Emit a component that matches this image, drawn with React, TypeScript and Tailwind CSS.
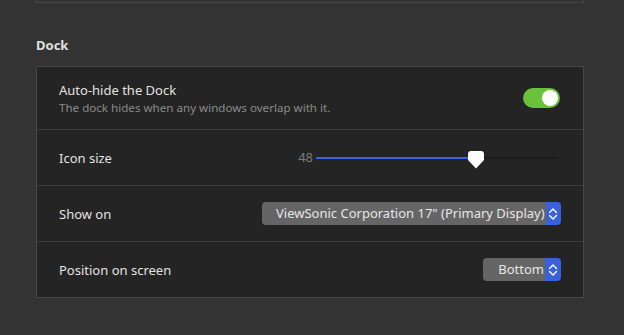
import React from 'react';

const FONT = { fontFamily: '"Noto Sans", "Open Sans", sans-serif' };

function Chevrons() {
  return (
    <svg width="10" height="16" viewBox="0 0 10 16" fill="none" stroke="#fff" strokeWidth="1.4" strokeLinecap="round" strokeLinejoin="round">
      <path d="M1.5 6.5 L5 3 L8.5 6.5" />
      <path d="M1.5 9.5 L5 13 L8.5 9.5" />
    </svg>
  );
}

function Select({ label, className }: { label: string; className: string }) {
  return (
    <div className={`flex h-[23px] items-stretch rounded-[4px] overflow-hidden ${className}`}>
      <div className="flex-1 flex items-center justify-end bg-[#656565] pl-[14px] pr-[1px] text-[13px] text-[#e6e6e6] whitespace-nowrap">
        {label}
      </div>
      <div className="w-[16px] flex items-center justify-center bg-[#3762d9]">
        <Chevrons />
      </div>
    </div>
  );
}

function Toggle() {
  return (
    <div className="w-[37px] h-[20px] rounded-full bg-[#6ac13a] flex items-center justify-end pr-[2px]">
      <div className="w-[16px] h-[16px] rounded-full bg-white" />
    </div>
  );
}

function Slider({ value }: { value: number }) {
  const pct = 66;
  return (
    <div className="flex items-center gap-[3px]">
      <span className="text-[13px] text-[#7a7a7a] w-[18px] text-right">{value}</span>
      <div className="relative w-[242px] h-[2px] bg-[#1b1b1b]">
        <div className="h-full bg-[#3a62e6]" style={{ width: `${pct}%` }} />
        <svg className="absolute top-[-6px]" style={{ left: `calc(${pct}% - 8px)` }} width="16" height="18" viewBox="0 0 16 18">
          <path d="M3 0 H13 Q16 0 16 3 V9 L8 17.5 L0 9 V3 Q0 0 3 0 Z" fill="#fff" />
        </svg>
      </div>
    </div>
  );
}

export default function App() {
  return (
    <div className="w-[624px] h-[335px] bg-[#333333] pl-[36px] pr-[40px] overflow-hidden" style={FONT}>
      {/* end of panel above */}
      <div className="h-[3px] border-x border-b border-[#474747] bg-[#333333]" />

      <div className="pt-[33px] pb-[12px] text-[13px] font-bold text-[#e0e0e0] leading-[18px]">Dock</div>

      <div className="border border-[#474747] bg-[#242424]">
        <div className="h-[63px] flex items-center justify-between pl-[22px] pr-[23px] border-b border-[#3c3c3c]">
          <div className="flex flex-col pt-[1px]">
            <span className="text-[13px] text-[#e2e2e2] leading-[18px]">Auto-hide the Dock</span>
            <span className="text-[11.6px] text-[#8a8a8a] leading-[18px]">The dock hides when any windows overlap with it.</span>
          </div>
          <Toggle />
        </div>
        <div className="h-[56px] flex items-center justify-between pl-[22px] pr-[25px] border-b border-[#3c3c3c]">
          <span className="text-[13px] text-[#e2e2e2] pt-[2px]">Icon size</span>
          <Slider value={48} />
        </div>
        <div className="h-[56px] flex items-center justify-between pl-[22px] pr-[22px] border-b border-[#3c3c3c]">
          <span className="text-[13px] text-[#e2e2e2] pt-[2px]">Show on</span>
          <Select label={'ViewSonic Corporation 17" (Primary Display)'} className="w-[299px]" />
        </div>
        <div className="h-[55px] flex items-center justify-between pl-[22px] pr-[22px]">
          <span className="text-[13px] text-[#e2e2e2] pt-[2px]">Position on screen</span>
          <Select label="Bottom" className="w-[78px]" />
        </div>
      </div>
    </div>
  );
}
